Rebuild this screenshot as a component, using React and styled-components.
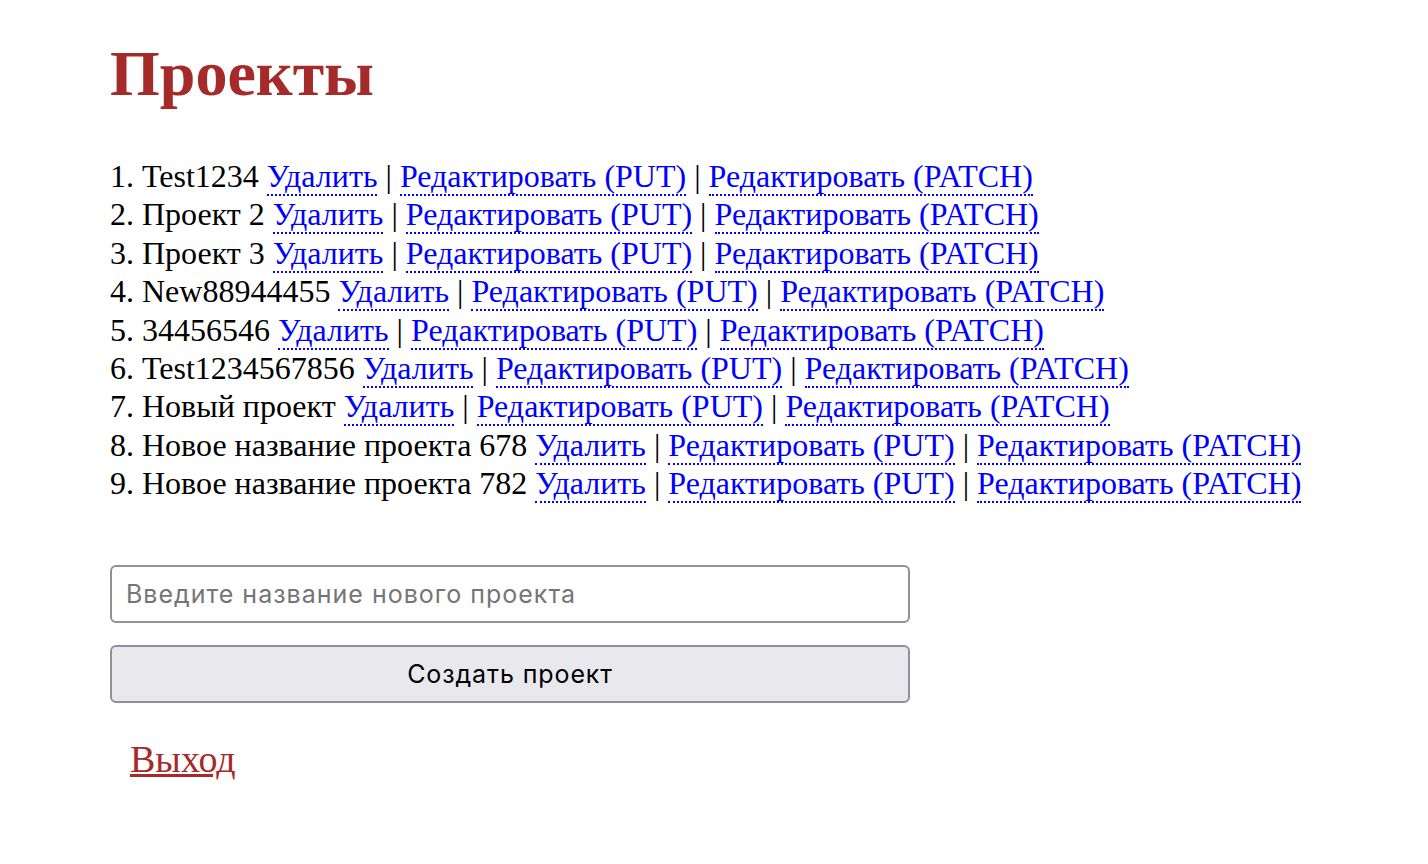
import React, { useState } from 'react'
import styled, { createGlobalStyle } from 'styled-components';

const GlobalStyle = createGlobalStyle`
    body {
        margin: 0;
        background: #ffffff;
        font-family: 'Liberation Serif', 'Times New Roman', serif;
        color: #000;
    }
`

const Page = styled.div`
    padding: 37px 0 60px 110px;
`

const Title = styled.h1`
    font-family: 'Liberation Serif', 'Times New Roman', serif;
    font-size: 64px;
    font-weight: 700;
    color: #a52a2a;
    margin: 0 0 46px 0;
    line-height: normal;
`

const ProjectList = styled.ol`
    list-style-position: inside;
    margin: 0 0 62px 0;
    padding: 0;
    font-size: 32px;
    line-height: 1.2;
`

const Item = styled.li`
    white-space: nowrap;
`

const ActionLink = styled.a`
    color: #0000ff;
    text-decoration: none;
    border-bottom: 2px dotted #0000ff;
    cursor: pointer;
`

const Form = styled.form`
    display: flex;
    flex-direction: column;
    gap: 22px;
    width: 800px;
`

const Input = styled.input`
    box-sizing: border-box;
    height: 58px;
    padding: 0 14px;
    border: 2px solid #8f8f9d;
    border-radius: 6px;
    font-family: 'Inter', 'Noto Sans', sans-serif;
    font-size: 25px;
    letter-spacing: 1px;
    color: #000;
    outline: none;
    &::placeholder {
        color: #757575;
    }
`

const Button = styled.button`
    box-sizing: border-box;
    height: 58px;
    border: 2px solid #8f8f9d;
    border-radius: 6px;
    background-color: #e9e9ed;
    font-family: 'Inter', 'Noto Sans', sans-serif;
    font-size: 25px;
    letter-spacing: 0.9px;
    color: #000;
    cursor: pointer;
`

const Logout = styled.a`
    display: inline-block;
    margin: 34px 0 0 20px;
    font-size: 38px;
    color: #a52a2a;
    text-decoration: underline;
    cursor: pointer;
`

const initialProjects = [
    'Test1234',
    'Проект 2',
    'Проект 3',
    'New88944455',
    '34456546',
    'Test1234567856',
    'Новый проект',
    'Новое название проекта 678',
    'Новое название проекта 782',
]

const App = () => {
    const [projects] = useState(initialProjects)
    const [name, setName] = useState('')

  return (
    <Page>
        <GlobalStyle/>
        <Title>Проекты</Title>
        <ProjectList>
            {projects.map((p, i) => (
                <Item key={i}>
                    {p} <ActionLink>Удалить</ActionLink> | <ActionLink>Редактировать (PUT)</ActionLink> | <ActionLink>Редактировать (PATCH)</ActionLink>
                </Item>
            ))}
        </ProjectList>
        <Form onSubmit={(e) => e.preventDefault()}>
            <Input placeholder="Введите название нового проекта" value={name} onChange={(e) => setName(e.target.value)}/>
            <Button type="submit">Создать проект</Button>
        </Form>
        <Logout>Выход</Logout>
    </Page>
  )
}
export default App;
